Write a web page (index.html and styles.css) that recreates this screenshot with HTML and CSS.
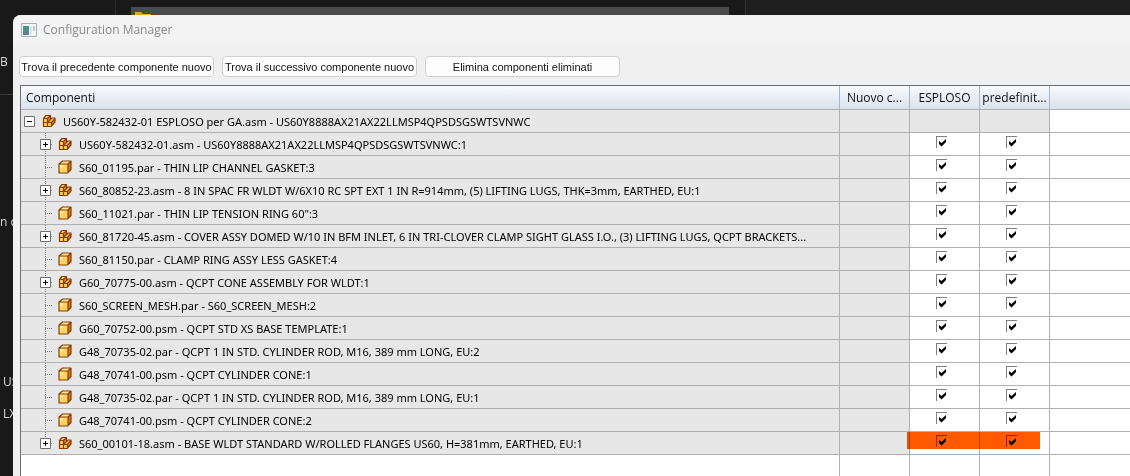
FILE: index.html
```html
<!DOCTYPE html>
<html lang="it">
<head>
<meta charset="utf-8">
<title>Configuration Manager</title>
<link rel="stylesheet" href="styles.css">
</head>
<body>
<svg class="defs" aria-hidden="true">
  <symbol id="part" viewBox="0 0 14 14">
    <path d="M1 4 4.500 1H13L10 4Z" fill="#ffe9a0"/>
    <path d="M10 4 13 1V9.500L10 12.500Z" fill="#d9731a"/>
    <path d="M1 4H10V13H1Z" fill="#fbd463"/>
    <path d="M2 5H6L2 9Z" fill="#fff0b0"/>
    <path d="M1 4 4.500 1H13V9.500L9.500 13H1ZM1 4H10V13M10 4 13 1" fill="none" stroke="#8a3c06" stroke-width="1.200" stroke-linejoin="round"/>
  </symbol>
  <symbol id="assembly" viewBox="0 0 14 14">
    <path d="M1.500 4.500 4 1.500H8.500V5.500L10 4H13V8L9 12.500H1.500Z" fill="#fbd05a"/>
    <path d="M5.500 4.500 8.500 1.500V5.500L5.500 8.500ZM9.500 8.500 13 4.500V8L9.500 12.500Z" fill="#e8862a"/>
    <path d="M1.500 4.500 4 1.500H8.500V5.500L10 4H13V8L9 12.500H1.500ZM1.500 4.500H5.500V12.500M5.500 4.500 8.500 1.500M1.500 8.500H9.500V12.500M9.500 8.500 13 4.500M5.500 8.500 8.500 5.500" fill="none" stroke="#8a3c06" stroke-width="1.200" stroke-linejoin="round"/>
  </symbol>
  <symbol id="plus" viewBox="0 0 11 11">
    <path d="M.5.5H10.500V10.500H.5Z" fill="#fff" stroke="#707070"/>
    <path d="M3 5.500H8M5.500 3V8" stroke="#000"/>
  </symbol>
  <symbol id="minus" viewBox="0 0 11 11">
    <path d="M.5.5H10.500V10.500H.5Z" fill="#fff" stroke="#707070"/>
    <path d="M3 5.500H8" stroke="#000"/>
  </symbol>
</svg>

<div class="desktop">
  <div class="side">
    <span class="side-b">B</span>
    <span class="side-m">n c</span>
    <span class="side-us">US</span>
    <span class="side-lx">LX</span>
  </div>
  <div class="pane"><div class="pane-row"><svg width="18" height="12" viewBox="0 0 18 12"><path d="M0 1H6L8 3H16V12H0Z" fill="#e2a32d"/></svg></div></div>
  <div class="rest"></div>
</div>

<main class="window">
  <header class="titlebar">
    <svg width="16" height="14" viewBox="0 0 16 14"><path d="M.5.5H15.500V13.500H.5Z" fill="#f4f7f8" stroke="#a5afb4"/><path d="M2 3H8V12H2Z" fill="#4a938d"/><path d="M2 9H8V12H2Z" fill="#5a7f98"/><path d="M9 3H11V12H9Z" fill="#dde6ea"/><path d="M12 3H14V8H12Z" fill="#b8c8d0"/></svg>
    <h1>Configuration Manager</h1>
  </header>
  <div class="toolbar">
    <button type="button">Trova il precedente componente nuovo</button>
    <button type="button">Trova il successivo componente nuovo</button>
    <button type="button">Elimina componenti eliminati</button>
  </div>
  <div class="grid">
    <table>
      <colgroup><col class="c-name"><col class="c-flag"><col class="c-flag"><col class="c-flag"><col></colgroup>
      <thead><tr><th class="first">Componenti</th><th>Nuovo c...</th><th>ESPLOSO</th><th>predefinit...</th><th></th></tr></thead>
      <tbody id="rows">
        <tr class="root"><td><div class="node"><button type="button" class="toggle" aria-label="Comprimi"><svg><use href="#minus"/></svg></button><svg class="icon"><use href="#assembly"/></svg><span class="label">US60Y-582432-01 ESPLOSO per GA.asm - US60Y8888AX21AX22LLMSP4QPSDSGSWTSVNWC</span></div></td><td></td><td></td><td></td><td></td></tr>
      </tbody>
    </table>
  </div>
</main>
<script src="rows.js"></script>
</body>
</html>
```
FILE: rows.js
```js
const items = [
  "US60Y-582432-01.asm - US60Y8888AX21AX22LLMSP4QPSDSGSWTSVNWC:1",
  "S60_01195.par - THIN LIP CHANNEL GASKET:3",
  "S60_80852-23.asm - 8 IN SPAC FR WLDT W/6X10 RC SPT EXT 1 IN R=914mm, (5) LIFTING LUGS, THK=3mm, EARTHED, EU:1",
  "S60_11021.par - THIN LIP TENSION RING 60\":3",
  "S60_81720-45.asm - COVER ASSY DOMED W/10 IN BFM INLET, 6 IN TRI-CLOVER CLAMP SIGHT GLASS I.O., (3) LIFTING LUGS, QCPT BRACKETS...",
  "S60_81150.par - CLAMP RING ASSY LESS GASKET:4",
  "G60_70775-00.asm - QCPT CONE ASSEMBLY FOR WLDT:1",
  "S60_SCREEN_MESH.par - S60_SCREEN_MESH:2",
  "G60_70752-00.psm - QCPT STD XS BASE TEMPLATE:1",
  "G48_70735-02.par - QCPT 1 IN STD. CYLINDER ROD, M16, 389 mm LONG, EU:2",
  "G48_70741-00.psm - QCPT CYLINDER CONE:1",
  "G48_70735-02.par - QCPT 1 IN STD. CYLINDER ROD, M16, 389 mm LONG, EU:1",
  "G48_70741-00.psm - QCPT CYLINDER CONE:2",
  "S60_00101-18.asm - BASE WLDT STANDARD W/ROLLED FLANGES US60, H=381mm, EARTHED, EU:1"
];
const body = document.getElementById("rows");
items.forEach((text, i) => {
  const asm = text.includes(".asm");
  const last = i === items.length - 1;
  const toggle = asm
    ? '<button type="button" class="toggle" aria-label="Espandi"><svg><use href="#plus"/></svg></button>'
    : "";
  const check = name => `<input type="checkbox" checked aria-label="${name}">`;
  const row = document.createElement("tr");
  row.className = "child" + (last ? " last" : "");
  row.innerHTML = `<td><div class="node"><span class="guide">${toggle}</span><svg class="icon"><use href="#${asm ? "assembly" : "part"}"/></svg><span class="label"></span></div></td><td></td><td class="check">${check("ESPLOSO")}${last ? '<div class="marker"></div>' : ""}</td><td class="check">${check("predefinito")}</td><td></td>`;
  row.querySelector(".label").textContent = text;
  body.append(row);
});
const filler = document.createElement("tr");
filler.className = "filler";
filler.innerHTML = "<td></td>".repeat(5);
body.append(filler);
```
FILE: styles.css
```css
* { box-sizing: border-box; }
body {
  margin: 0;
  height: 100vh;
  overflow: hidden;
  background: #191919;
  font: 12px/16px "Open Sans", "Noto Sans", sans-serif;
  color: #111;
}
.defs { position: absolute; width: 0; height: 0; }

.desktop { display: flex; height: 100%; }
.side {
  width: 116px;
  border-right: 1px solid #2b2b2b;
  color: #d8d8d8;
  display: flex;
  flex-direction: column;
  background: linear-gradient(#3a3a3a, #3a3a3a) 0 94px / 100% 1px no-repeat;
}
.side-b { margin-top: 54px; }
.side-m { margin-top: 144px; }
.side-us { margin: 144px 0 0 3px; }
.side-lx { margin: 16px 0 0 3px; }
.pane { width: 630px; padding: 7px 16px 0 15px; border-right: 1px solid #333; }
.pane-row { height: 24px; padding: 4px; background: #4b4b4b; }
.pane-row svg { display: block; }
.rest { flex: 1; background: #1f1f1f; }

.window {
  position: absolute;
  inset: 15px 0 0 13px;
  display: flex;
  flex-direction: column;
  overflow: hidden;
  background: #f0f0f0;
  border-top-left-radius: 8px;
}
.titlebar {
  display: flex;
  align-items: center;
  gap: 6px;
  height: 30px;
  padding-left: 8px;
  background: #f3f3f3;
}
.titlebar h1 { margin: 0; font-size: 12px; font-weight: 400; color: #8a8a8a; }
.toolbar { display: flex; gap: 8px; padding: 11px 6px 8px; }
.toolbar button {
  width: 195px;
  height: 21px;
  padding: 0;
  white-space: nowrap;
  border: 1px solid #d0d0d0;
  border-radius: 4px;
  background: #fdfdfd;
  color: #111;
  font: 11px/16px "Liberation Sans", Arial, sans-serif;
}

.grid {
  flex: 1;
  margin-left: 7px;
  overflow: hidden;
  border-top: 1px solid #6b6e73;
  border-left: 1px solid #6b6e73;
  background: #fff;
}
table { width: 100%; table-layout: fixed; border-spacing: 0; }
.c-name { width: 819px; }
.c-flag { width: 70px; }
th, td { padding: 0; border-right: 1px solid #b0b0b0; border-bottom: 1px solid #b0b0b0; }
th:last-child, td:last-child { border-right: 0; }
th {
  height: 24px;
  border-right-color: #a3b8d0;
  background: linear-gradient(#fafcfe, #e9eff6 45%, #dae2ed);
  font-weight: 400;
  white-space: nowrap;
}
th.first { padding-left: 5px; text-align: left; }
td { height: 23px; }
td:nth-child(-n+2), .root td:nth-child(-n+4) { background: #e7e7e7; }

.node { display: flex; align-items: center; height: 22px; white-space: nowrap; overflow: hidden; }
.label { padding-top: 2px; font-family: "Noto Sans", "Open Sans", sans-serif; font-size: 11px; color: #000; }
.icon { flex: none; width: 14px; height: 14px; margin-right: 7px; }
.root .node { padding-left: 3px; }
.root .toggle { margin-right: 7px; }
.child .node { padding-left: 19px; }
.toggle { flex: none; width: 11px; height: 11px; padding: 0; border: 0; background: none; }
.toggle svg { display: block; width: 11px; height: 11px; }
.guide {
  flex: none;
  display: flex;
  align-items: center;
  width: 18px;
  height: 22px;
  background:
    repeating-linear-gradient(#808080 0 1px, transparent 1px 2px) 5px 0 / 1px 100% no-repeat,
    repeating-linear-gradient(90deg, #808080 0 1px, transparent 1px 2px) 5px 11px / 7px 1px no-repeat;
}
.last .guide { background-size: 1px 50%, 7px 1px; }

.check { position: relative; padding: 0 6px 4px 0; text-align: center; }
.check input {
  appearance: none;
  display: block;
  width: 11px;
  height: 12px;
  margin: 0 auto;
  border: solid #808080;
  border-width: 1px 0 0 1px;
  background: #fff;
}
.check input:checked {
  background: #fff url("data:image/svg+xml,%3Csvg xmlns='http://www.w3.org/2000/svg' width='10' height='11'%3E%3Cpath d='M2 4 4.500 6 9 2V5L4.500 9.500 2 7Z'/%3E%3C/svg%3E") no-repeat;
}
.marker {
  position: absolute;
  z-index: 1;
  top: 0;
  left: -3px;
  width: 133px;
  height: 17px;
  background: #ff5a00;
  mix-blend-mode: multiply;
}
.filler td { border-bottom: 0; background: #fff; }
.filler td:nth-child(-n+2) { background: #fff; }
```
